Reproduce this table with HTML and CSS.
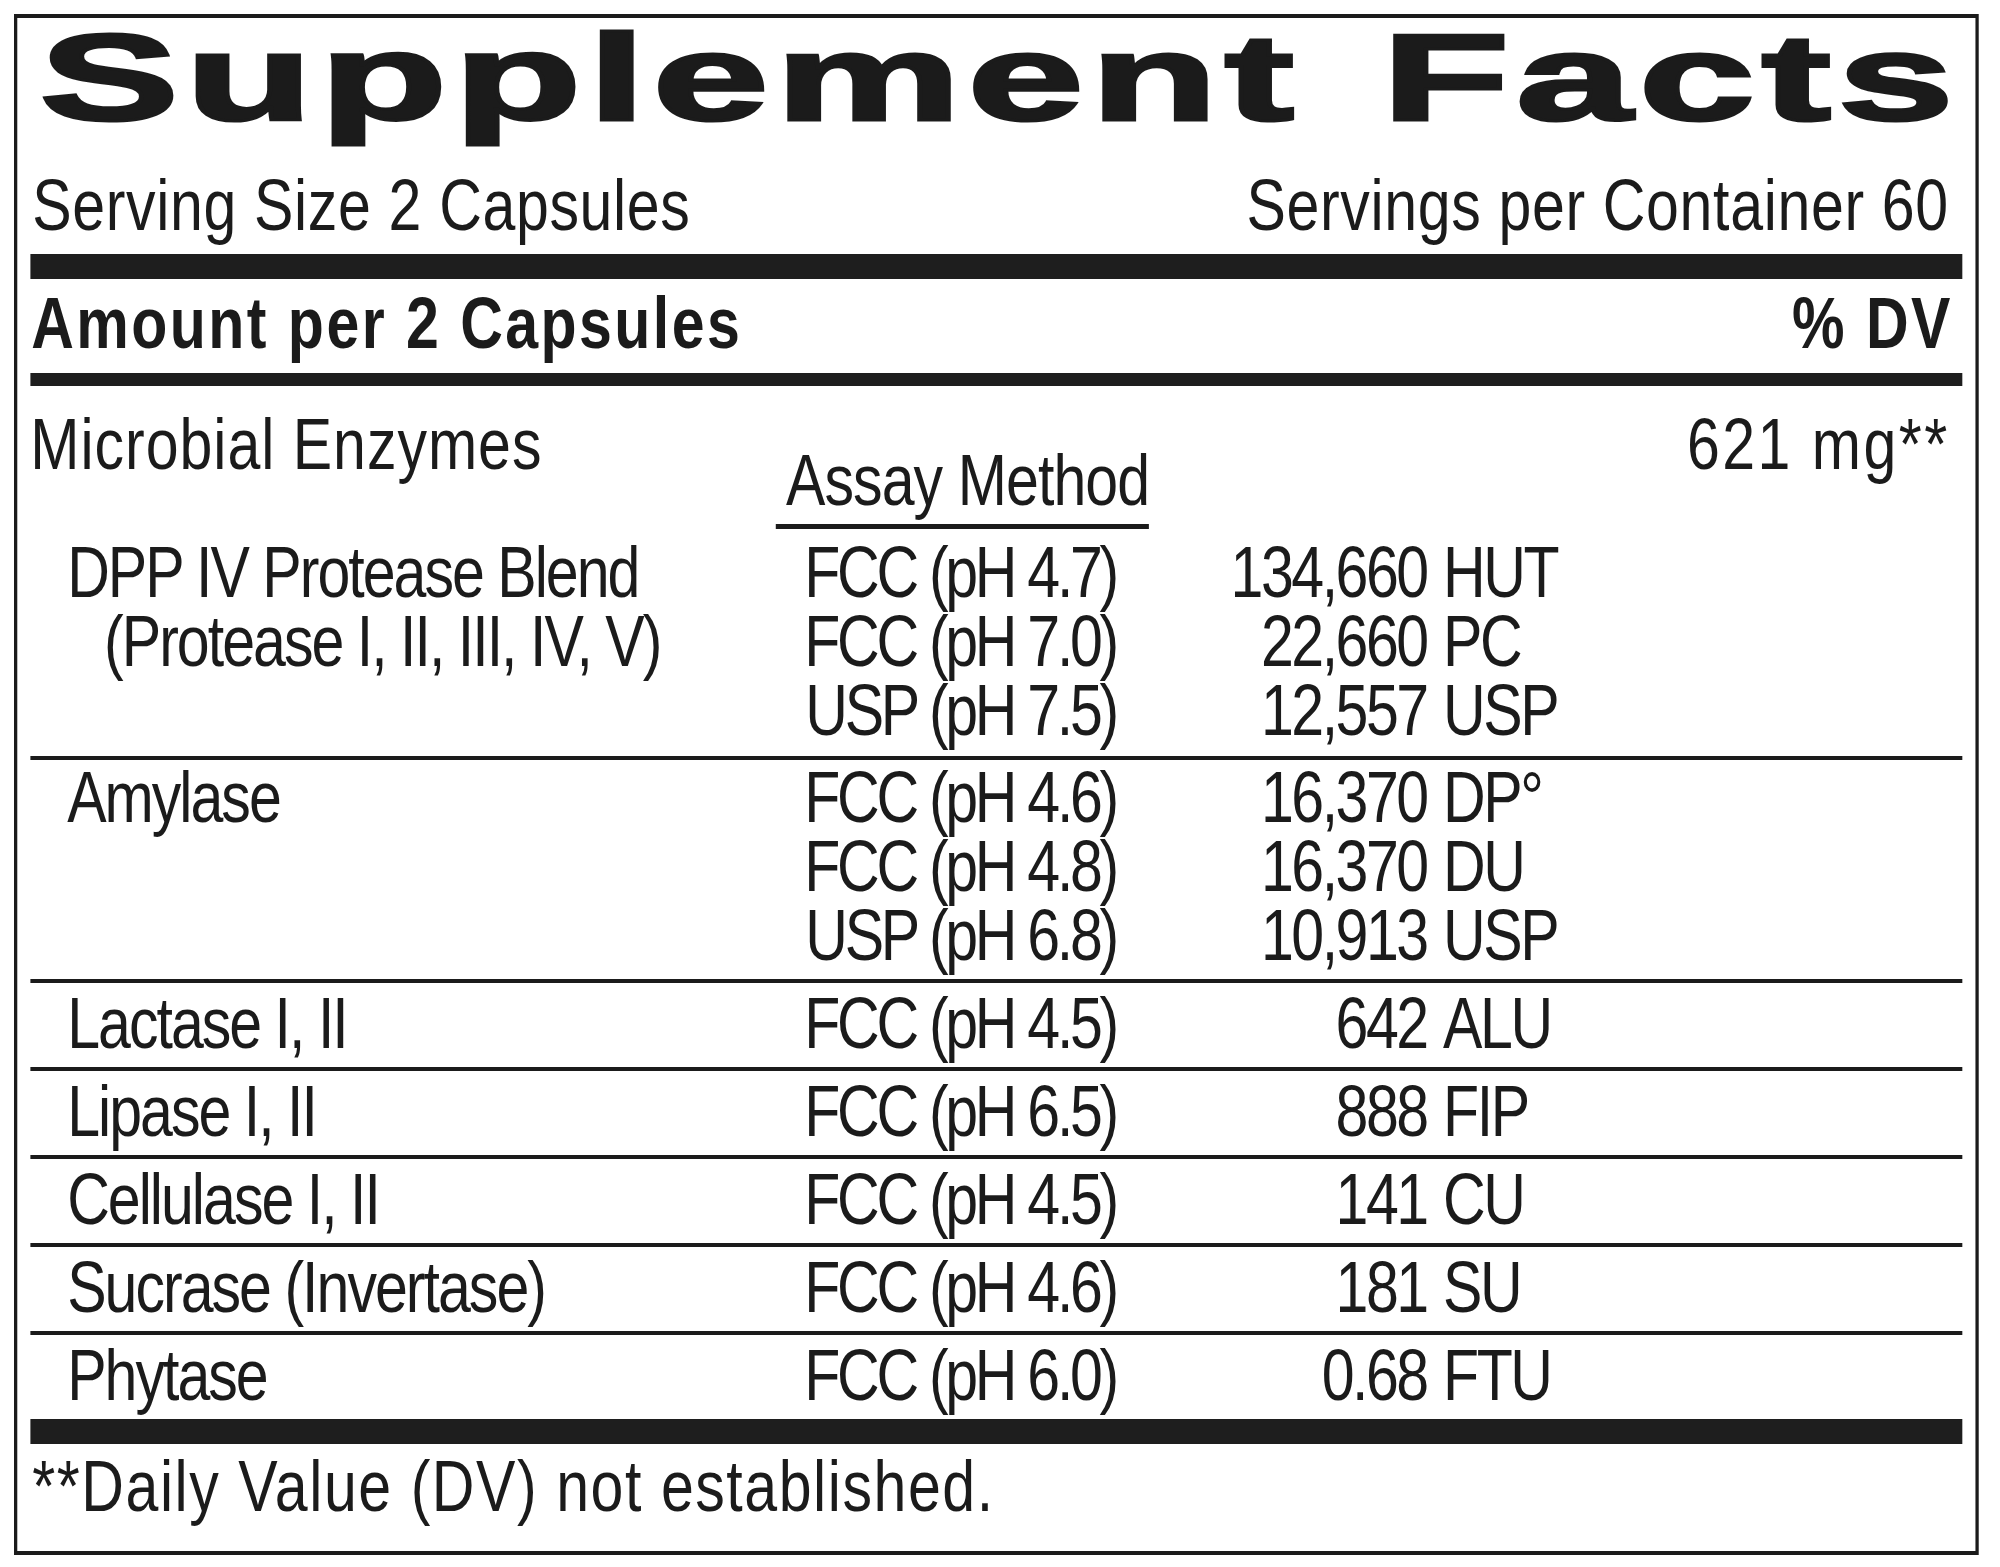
FILE: index.html
```html
<!DOCTYPE html>
<html lang="en">
<head>
<meta charset="utf-8">
<title>Supplement Facts</title>
<link rel="stylesheet" href="styles.css">
</head>
<body>
<div class="sheet">
<div class="label">
  <div class="title"><span>Supplement Facts</span></div>
  <div class="serving"><span>Serving Size 2 Capsules</span><span>Servings per Container 60</span></div>
  <div class="bar bar-thick"></div>
  <div class="amount"><span>Amount per 2 Capsules</span><span>% DV</span></div>
  <div class="bar bar-mid"></div>

  <div class="head">
    <div class="group">Microbial Enzymes</div>
    <div class="assay-head">Assay Method</div>
    <div class="dv-amt">621 mg**</div>
  </div>

  <div class="row first">
    <div class="name">DPP IV Protease Blend<br><span class="sub">(Protease I, II, III, IV, V)</span></div>
    <div class="assay">FCC (pH 4.7)<br>FCC (pH 7.0)<br>USP (pH 7.5)</div>
    <div class="num">134,660<br>22,660<br>12,557</div>
    <div class="unit">HUT<br>PC<br>USP</div>
  </div>

  <div class="row multi">
    <div class="name">Amylase</div>
    <div class="assay">FCC (pH 4.6)<br>FCC (pH 4.8)<br>USP (pH 6.8)</div>
    <div class="num">16,370<br>16,370<br>10,913</div>
    <div class="unit">DP°<br>DU<br>USP</div>
  </div>

  <div class="row">
    <div class="name">Lactase I, II</div>
    <div class="assay">FCC (pH 4.5)</div>
    <div class="num">642</div>
    <div class="unit">ALU</div>
  </div>

  <div class="row">
    <div class="name">Lipase I, II</div>
    <div class="assay">FCC (pH 6.5)</div>
    <div class="num">888</div>
    <div class="unit">FIP</div>
  </div>

  <div class="row">
    <div class="name">Cellulase I, II</div>
    <div class="assay">FCC (pH 4.5)</div>
    <div class="num">141</div>
    <div class="unit">CU</div>
  </div>

  <div class="row">
    <div class="name">Sucrase (Invertase)</div>
    <div class="assay">FCC (pH 4.6)</div>
    <div class="num">181</div>
    <div class="unit">SU</div>
  </div>

  <div class="row">
    <div class="name">Phytase</div>
    <div class="assay">FCC (pH 6.0)</div>
    <div class="num">0.68</div>
    <div class="unit">FTU</div>
  </div>

  <div class="bar bar-end"></div>
  <div class="footnote">**Daily Value (DV) not established.</div>
</div>
</div>
</body>
</html>
```

FILE: styles.css
```css
/* The label is laid out at a wider width and then compressed
   horizontally (scaleX 0.82) to reproduce the condensed type face.
   All horizontal lengths inside .label are real pixels / 0.82. */

html,
body {
  overflow: hidden;
}

body {
  margin: 0;
  background: #ffffff;
  color: #1b1b1b;
  font-family: "Liberation Sans", Arial, sans-serif;
  font-size: 72px;
  line-height: 69px;
}

.sheet {
  width: 1965px;
  height: 1541px;
  margin: 14px 0 0 14px;
  overflow: hidden;
}

.label {
  box-sizing: border-box;
  width: 2396.3px;
  height: 1541px;
  border-style: solid;
  border-color: #1b1b1b;
  border-width: 4px 4.88px;
  padding: 0 15.85px;
  transform: scaleX(0.82);
  transform-origin: 0 0;
}

.title {
  height: 119px;
  line-height: 119px;
  padding-left: 11px;
  white-space: nowrap;
}

.title span {
  display: inline-block;
  font-weight: 700;
  font-size: 123px;
  letter-spacing: 3.8px;
  word-spacing: 9.8px;
  transform: scaleX(2.073);
  transform-origin: 0 50%;
  -webkit-text-stroke: 3px #1b1b1b;
}

.serving {
  display: flex;
  justify-content: space-between;
  margin-top: 34px;
  padding: 0 17px 0 2.4px;
  letter-spacing: 0.8px;
}

.bar {
  background: #1e1e1e;
}

.bar-thick {
  height: 25px;
  margin-top: 14px;
}

.amount {
  display: flex;
  justify-content: space-between;
  font-weight: 700;
  letter-spacing: 3px;
  padding: 9.5px 12px 0 1.2px;
}

.bar-mid {
  height: 13px;
  margin-top: 15.5px;
}

.head,
.row {
  display: grid;
  grid-template-columns: 840.2px 487.8px 378px 1fr;
}

.head {
  padding-top: 23.5px;
  align-items: start;
}

.group {
  grid-column: 1;
  letter-spacing: 1.2px;
}

.assay-head {
  grid-column: 2;
  justify-self: end;
  white-space: nowrap;
  letter-spacing: -1.1px;
  margin: 36px -36.6px 0 0;
  padding: 0 0 9px 12.2px;
  border-bottom: 5px solid #1b1b1b;
}

.dv-amt {
  grid-column: 4;
  justify-self: end;
  letter-spacing: 3px;
  padding-right: 16px;
}

.row {
  border-top: 4px solid #1b1b1b;
  padding: 6px 0 9px;
  white-space: nowrap;
}

.row.first {
  border-top: 0;
  padding: 9px 0 11px;
}

.row.multi {
  padding: 3px 0 9.5px;
}

.name {
  padding-left: 45px;
  letter-spacing: -2.4px;
}

.name .sub {
  padding-left: 45px;
}

.assay {
  text-align: right;
  letter-spacing: -4px;
  padding-right: 4px;
}

.num {
  text-align: right;
  letter-spacing: -3px;
  padding-right: 3px;
}

.unit {
  padding-left: 17px;
  letter-spacing: -3px;
}

.bar-end {
  height: 25px;
}

.footnote {
  padding: 8px 0 0 2.4px;
  letter-spacing: 1.9px;
}
```
